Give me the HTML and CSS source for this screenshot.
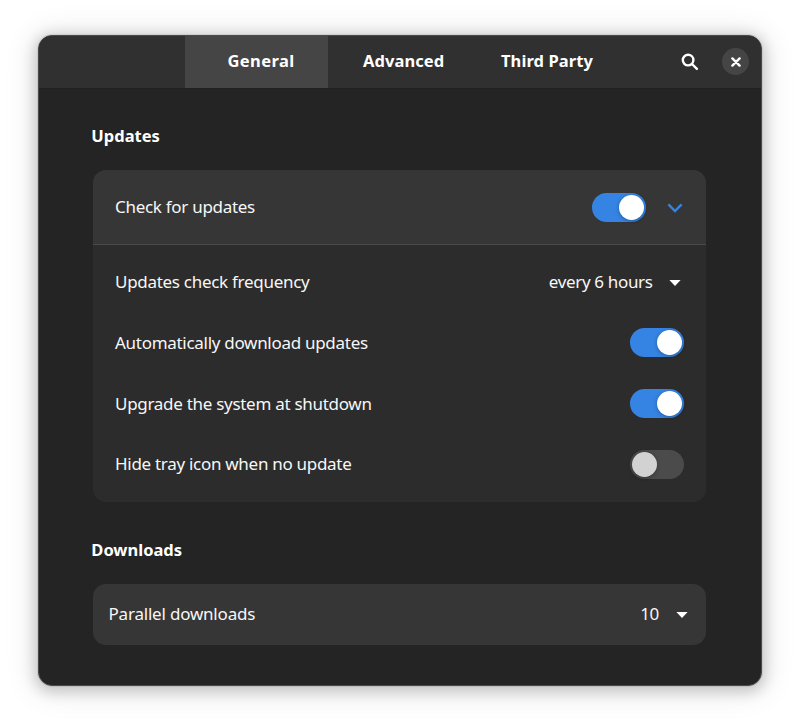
FILE: index.html
```html
<!DOCTYPE html>
<html lang="en">
<head>
<meta charset="utf-8">
<title>Preferences</title>
<link rel="stylesheet" href="styles.css">
</head>
<body>
<div class="window">
  <header class="headerbar">
    <nav class="tabs">
      <div class="tab active">General</div>
      <div class="tab advanced">Advanced</div>
      <div class="tab third">Third Party</div>
    </nav>
    <div class="actions">
      <svg class="search" width="18" height="18" viewBox="0 0 18 18"><circle cx="7.1" cy="7.1" r="5.3"/><path d="M11 11l4.9 4.9"/></svg>
      <div class="close"><svg width="10" height="10" viewBox="0 0 10 10"><path d="M1.4 1.4l7.2 7.2M8.6 1.4l-7.2 7.2"/></svg></div>
    </div>
  </header>
  <main class="content">
    <h2>Updates</h2>
    <section class="card updates">
      <div class="row expander">
        <span class="label">Check for updates</span>
        <span class="switch on"></span>
        <svg class="chevron" width="16" height="10" viewBox="0 0 16 10"><path d="M1.4 1.4l6.6 6.7 6.6-6.7"/></svg>
      </div>
      <div class="nested">
        <div class="row"><span class="label">Updates check frequency</span><span class="value">every 6 hours</span><svg class="caret" width="12" height="6" viewBox="0 0 12 6"><path d="M.4 0h11.2L6 6z"/></svg></div>
        <div class="row"><span class="label">Automatically download updates</span><span class="switch on"></span></div>
        <div class="row"><span class="label">Upgrade the system at shutdown</span><span class="switch on"></span></div>
        <div class="row"><span class="label">Hide tray icon when no update</span><span class="switch"></span></div>
      </div>
    </section>
    <h2>Downloads</h2>
    <section class="card downloads">
      <div class="row"><span class="label">Parallel downloads</span><span class="value">10</span><svg class="caret" width="12" height="6" viewBox="0 0 12 6"><path d="M.4 0h11.2L6 6z"/></svg></div>
    </section>
  </main>
</div>
</body>
</html>
```
FILE: styles.css
```css
* { box-sizing: border-box; }
body {
  margin: 0;
  padding: 35px 38px 0 38px;
  height: 727px;
  overflow: hidden;
  background: #fff;
  color: #f7f7f7;
  font: 17px/24px "Noto Sans", sans-serif;
  letter-spacing: -.29px;
}
.window {
  height: 650.5px;
  border: 1px solid #484a4b;
  border-radius: 14px;
  background: #242424;
  overflow: hidden;
  box-shadow: 0 0 0 1px rgba(0,0,0,.07), 0 3px 14px 3px rgba(0,0,0,.18), 0 2px 30px 6px rgba(0,0,0,.09);
}
.headerbar {
  display: flex;
  height: 52.5px;
  padding-left: 146px;
  background: #303030;
  border-bottom: 1px solid #212121;
  font-size: 16.5px;
  font-weight: 700;
  letter-spacing: .08px;
}
.tabs { display: flex; flex: 1; }
.tab { display: flex; align-items: center; padding-bottom: 1px; color: #fff; white-space: nowrap; }
.active { width: 143px; padding-left: 42.5px; background: #454545; letter-spacing: .4px; }
.advanced { width: 139px; padding-left: 35px; }
.third { padding-left: 34px; }
.actions { display: flex; align-items: center; gap: 23.5px; padding-right: 12px; }
.search, .close svg, .chevron { fill: none; stroke: #fff; stroke-width: 2.4; stroke-linecap: round; }
.close {
  display: flex;
  align-items: center;
  justify-content: center;
  width: 27px;
  height: 27px;
  border-radius: 50%;
  background: #454545;
}
.content { padding: 35.5px 55px 0 53.5px; }
h2 { margin: 0 0 22px -1.2px; font-size: 16.5px; line-height: 24px; color: #fff; letter-spacing: 0; }
.card { border-radius: 13px; background: #363636; overflow: hidden; }
.updates { height: 331.5px; margin-bottom: 36.5px; background: #2c2c2c; }
.row { display: flex; align-items: center; height: 60.8px; padding: 0 22px 0 22.5px; }
.expander { height: 75.2px; background: #363636; border-bottom: 1.5px solid #4a4a4a; }
.nested { padding-top: 6.5px; }
.label { flex: 1; }
.value { letter-spacing: -.35px; }
.caret { margin: 1px 3px 0 16.5px; fill: #fff; }
.chevron { margin: 1px 1px 0 21.5px; stroke: #3584e4; stroke-linecap: butt; }
.switch {
  display: flex;
  width: 54px;
  height: 29px;
  padding: 2px;
  border-radius: 15px;
  background: #4b4b4b;
}
.switch::before {
  content: "";
  width: 25px;
  height: 25px;
  border-radius: 50%;
  background: #d2d2d2;
  box-shadow: 0 1px 4px rgba(0,0,0,.3);
}
.switch.on { justify-content: flex-end; background: #3584e4; }
.switch.on::before { background: #fff; }
.downloads .row { padding: 0 15.5px 0 16px; }
.downloads .label { letter-spacing: -.2px; }
```
